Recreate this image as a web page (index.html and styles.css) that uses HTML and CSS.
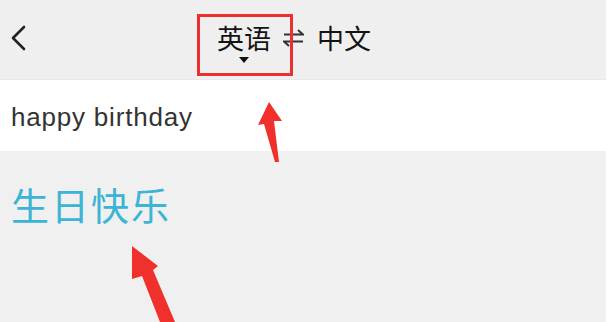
FILE: index.html
```html
<!DOCTYPE html>
<html lang="zh-CN">
<head>
<meta charset="utf-8">
<title>翻译</title>
<link rel="stylesheet" href="styles.css">
</head>
<body>
<div class="page">
  <header class="header">
    <svg class="back" width="16" height="26" viewBox="0 0 16 26"><path d="M14 2 L3 13 L14 24" fill="none" stroke="#222" stroke-width="2.6" stroke-linecap="round" stroke-linejoin="round"/></svg>
    <div class="title">
      <div class="src">
        <span class="lang">英语</span>
        <span class="caret"></span>
      </div>
      <svg class="swap" width="21" height="30" viewBox="0 0 21 30"><path d="M1 11.5 H20 L15 7" fill="none" stroke="#333" stroke-width="2"/><path d="M20 18.5 H1 L6 23" fill="none" stroke="#333" stroke-width="2"/></svg>
      <span class="lang dst">中文</span>
    </div>
  </header>
  <div class="input-row">happy birthday</div>
  <div class="result">生日快乐</div>
</div>
<div class="mark-box"></div>
<svg class="arrows" width="612" height="322" viewBox="0 0 612 322">
  <polygon points="269,102 282,121 274,121 279,162 275,162 264,124 258,125" fill="#f0302c"/>
  <polygon points="132,246 158,266 153,270 175,322 160,322 142,276 132,279" fill="#f0302c"/>
</svg>
</body>
</html>
```
FILE: styles.css
```css
html, body {
  margin: 0;
  padding: 0;
  background: #ffffff;
}
body {
  width: 612px;
  height: 322px;
  overflow: hidden;
  position: relative;
  font-family: "Noto Sans CJK SC", "Noto Sans", sans-serif;
}
.page {
  width: 606px;
  height: 322px;
  background: #f0f0f0;
  display: flex;
  flex-direction: column;
}
.header {
  height: 80px;
  background: #efefef;
  display: flex;
  align-items: flex-start;
  border-bottom: 1px solid #e8e8e8;
  box-sizing: border-box;
}
.back {
  margin-left: 10px;
  margin-top: 25px;
  flex: none;
}
.title {
  display: flex;
  align-items: flex-start;
  margin-left: 191px;
  padding-top: 23px;
}
.src {
  display: flex;
  flex-direction: column;
  align-items: center;
}
.lang {
  font-size: 27px;
  line-height: 30px;
  color: #141414;
  font-weight: 400;
}
.caret {
  width: 0;
  height: 0;
  border-left: 5px solid transparent;
  border-right: 5px solid transparent;
  border-top: 6px solid #111;
  margin-top: 4px;
}
.swap {
  margin-left: 12px;
  flex: none;
}
.dst {
  margin-left: 13px;
}
.input-row {
  height: 71px;
  background: #ffffff;
  display: flex;
  align-items: center;
  padding-left: 11px;
  padding-top: 4px;
  font-family: "Liberation Sans", Arial, sans-serif;
  font-size: 26px;
  letter-spacing: 0.8px;
  color: #333;
  box-sizing: border-box;
}
.result {
  padding-top: 28px;
  padding-left: 11px;
  font-size: 38px;
  line-height: 50px;
  letter-spacing: 2px;
  color: #3cb4d4;
}
.mark-box {
  position: absolute;
  left: 197px;
  top: 14px;
  width: 96px;
  height: 62px;
  box-sizing: border-box;
  border: 3px solid #ec2f2f;
}
.arrows {
  position: absolute;
  left: 0;
  top: 0;
  pointer-events: none;
}
```
